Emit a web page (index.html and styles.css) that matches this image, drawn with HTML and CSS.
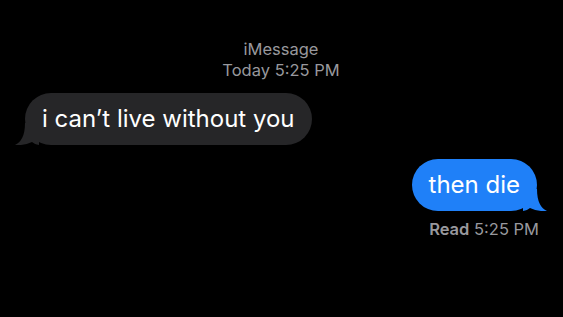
FILE: index.html
```html
<!DOCTYPE html>
<html lang="en">
  <head>
    <meta charset="UTF-8" />
    <title>iMessage</title>
    <link rel="stylesheet" href="styles.css">
  </head>
  <body>
    <div class="thread">
      <div class="header">
        <div>iMessage</div>
        <div>Today 5:25 PM</div>
      </div>

      <div class="row in">
        <div class="bubble gray">
          i can’t live without you
          <svg class="tail" width="24" height="22" viewBox="0 0 24 22">
            <path d="M10 0 C10 13 6 19 0 22 C6 22.5 12 21.5 17 19 C19 20.5 21 21.5 24 22 L24 0 Z" fill="#262628" />
          </svg>
        </div>
      </div>

      <div class="row out">
        <div class="bubble blue">
          then die
          <svg class="tail" width="24" height="22" viewBox="0 0 24 22">
            <path d="M10 0 C10 13 6 19 0 22 C6 22.5 12 21.5 17 19 C19 20.5 21 21.5 24 22 L24 0 Z" fill="#1f80f8" />
          </svg>
        </div>
      </div>

      <div class="status"><b>Read</b> 5:25 PM</div>
    </div>
  </body>
</html>
```

FILE: styles.css
```css
body {
  background: #000;
  margin: 0;
  font-family: Inter, "Liberation Sans", sans-serif;
}

.thread {
  display: flex;
  flex-direction: column;
  padding: 39px 26px 0 25px;
}

.header {
  text-align: center;
  color: #98989d;
  font-size: 16.5px;
  line-height: 21px;
  margin-bottom: 12px;
}

.row {
  display: flex;
}

.row.out {
  justify-content: flex-end;
  margin-top: 14px;
}

.bubble {
  position: relative;
  height: 52px;
  line-height: 52px;
  padding: 0 17px;
  border-radius: 26px;
  font-size: 24px;
  color: #fff;
  white-space: nowrap;
}

.gray {
  background: #262628;
}

.blue {
  background: #1f80f8;
}

.tail {
  position: absolute;
  bottom: 0;
  left: -10px;
}

.blue .tail {
  left: auto;
  right: -10px;
  transform: scaleX(-1);
}

.status {
  align-self: flex-end;
  margin-top: 8px;
  margin-right: -2px;
  color: #98989d;
  font-size: 16.5px;
  line-height: 20px;
}

.status b {
  font-weight: 600;
}
```
